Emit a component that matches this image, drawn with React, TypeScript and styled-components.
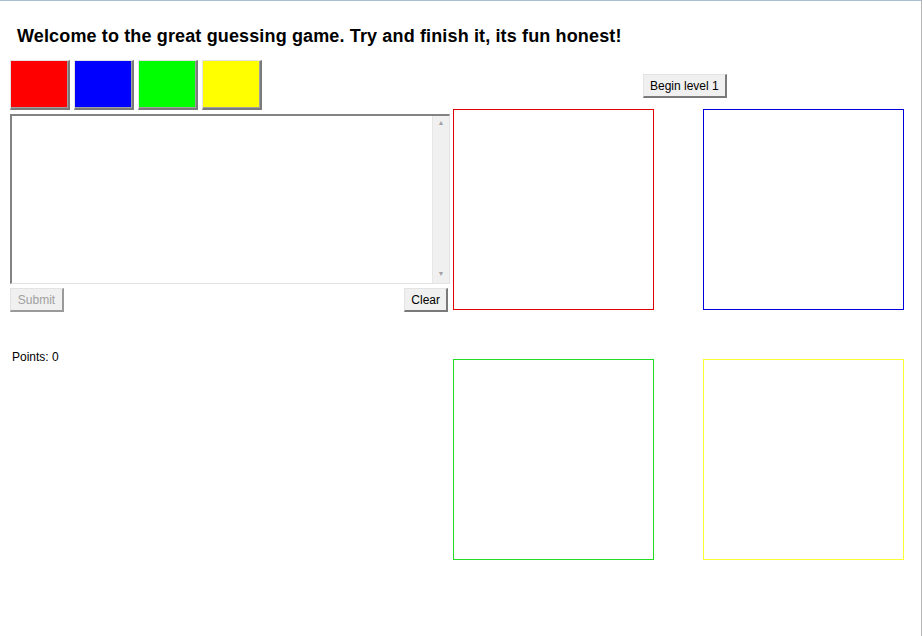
import React, { FC } from 'react';
import styled, { createGlobalStyle } from 'styled-components';

const GlobalStyle = createGlobalStyle`
  html, body {
    margin: 0;
    padding: 0;
    background: #ffffff;
  }
  body {
    font-family: 'Liberation Sans', Arial, sans-serif;
    color: #000000;
  }
`;

const swatches = ['#ff0000', '#0000ff', '#00ff00', '#ffff00'];
const boxColors = ['#e00000', '#0000dd', '#22dd22', '#ffff33'];

const App: FC = () => {
  return (
    <>
      <GlobalStyle />
      <Page>
        <Title>Welcome to the great guessing game. Try and finish it, its fun honest!</Title>
        <Main>
          <LeftColumn>
            <SwatchRow>
              {swatches.map((c) => (
                <Swatch key={c} $color={c} />
              ))}
            </SwatchRow>
            <AnswerBox>
              <AnswerInput spellCheck={false} />
              <ScrollBar>
                <Arrow>▲</Arrow>
                <Arrow>▼</Arrow>
              </ScrollBar>
            </AnswerBox>
            <ActionRow>
              <SubmitButton disabled>Submit</SubmitButton>
              <ClassicButton>Clear</ClassicButton>
            </ActionRow>
            <Points>Points: 0</Points>
          </LeftColumn>
          <RightColumn>
            <LevelBar>
              <ClassicButton>Begin level 1</ClassicButton>
            </LevelBar>
            <BoxGrid>
              {boxColors.map((c) => (
                <GuessBox key={c} $color={c} />
              ))}
            </BoxGrid>
          </RightColumn>
        </Main>
      </Page>
    </>
  );
};

export default App;

const Page = styled.div`
  box-sizing: border-box;
  width: 922px;
  height: 636px;
  border-top: 1px solid #a9bdd2;
  border-right: 1px solid #b4b4b4;
  padding: 24px 0 0 10px;
`;

const Title = styled.h1`
  margin: 0 0 13px 7px;
  font-size: 18px;
  line-height: 22px;
  font-weight: bold;
  letter-spacing: 0.14px;
`;

const Main = styled.div`
  display: flex;
  gap: 3px;
`;

const LeftColumn = styled.div`
  width: 440px;
  display: flex;
  flex-direction: column;
`;

const SwatchRow = styled.div`
  display: flex;
  gap: 4px;
  height: 50px;
`;

const Swatch = styled.div<{ $color: string }>`
  box-sizing: border-box;
  width: 60px;
  height: 50px;
  background: ${(p) => p.$color};
  border-top: 1px solid #e3e3e3;
  border-left: 1px solid #e3e3e3;
  border-right: 2px solid #7a7a7a;
  border-bottom: 2px solid #7a7a7a;
  box-shadow: inset -1px -1px 0 #a0a0a0;
`;

const AnswerBox = styled.div`
  box-sizing: border-box;
  margin-top: 4px;
  width: 440px;
  height: 170px;
  display: flex;
  border-top: 2px solid #828282;
  border-left: 2px solid #828282;
  border-right: 1px solid #e3e3e3;
  border-bottom: 1px solid #e3e3e3;
`;

const AnswerInput = styled.textarea`
  flex: 1;
  border: none;
  outline: none;
  resize: none;
  padding: 2px;
  font-family: 'Liberation Mono', monospace;
  font-size: 13px;
`;

const ScrollBar = styled.div`
  width: 16px;
  background: #f0f0f0;
  border-left: 1px solid #e6e6e6;
  display: flex;
  flex-direction: column;
  justify-content: space-between;
  align-items: center;
  padding: 3px 0 5px;
`;

const Arrow = styled.span`
  font-size: 7px;
  line-height: 8px;
  color: #a3a3a3;
`;

const ActionRow = styled.div`
  margin-top: 4px;
  margin-right: 2px;
  display: flex;
  justify-content: space-between;
`;

const ClassicButton = styled.button`
  box-sizing: border-box;
  height: 24px;
  padding: 0 6px;
  background: #f0f0f0;
  border-top: 1px solid #e3e3e3;
  border-left: 1px solid #e3e3e3;
  border-right: 2px solid #7a7a7a;
  border-bottom: 2px solid #7a7a7a;
  border-radius: 0;
  font-family: 'Liberation Sans', Arial, sans-serif;
  font-size: 12px;
  color: #000000;
  &:disabled {
    color: #a0a0a0;
    border-right-color: #9a9a9a;
    border-bottom-color: #9a9a9a;
  }
`;

const SubmitButton = styled(ClassicButton)`
  width: 54px;
`;

const Points = styled.div`
  margin: 38px 0 0 2px;
  font-size: 12px;
  line-height: 14px;
`;

const RightColumn = styled.div`
  display: flex;
  flex-direction: column;
`;

const LevelBar = styled.div`
  height: 49px;
  padding: 14px 0 0 190px;
  box-sizing: border-box;
`;

const BoxGrid = styled.div`
  display: grid;
  grid-template-columns: 201px 201px;
  gap: 49px;
`;

const GuessBox = styled.div<{ $color: string }>`
  box-sizing: border-box;
  width: 201px;
  height: 201px;
  border: 1px solid ${(p) => p.$color};
`;
